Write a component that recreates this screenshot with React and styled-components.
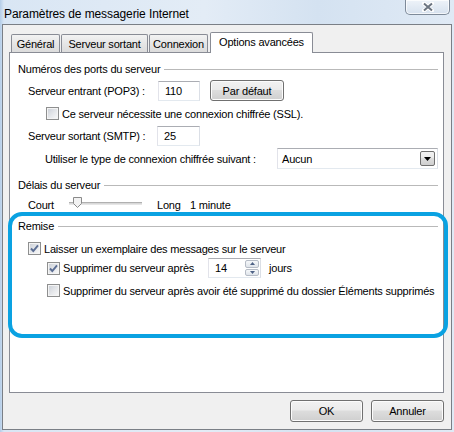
import React from "react";
import styled, { createGlobalStyle } from "styled-components";

const GlobalStyle = createGlobalStyle`
  html, body {
    margin: 0;
    padding: 0;
  }
  body {
    width: 454px;
    height: 432px;
    overflow: hidden;
    font-family: "Liberation Sans", Arial, sans-serif;
    font-size: 11px;
    letter-spacing: -0.2px;
    color: #000;
  }
  * {
    box-sizing: border-box;
  }
`;

const Window = styled.div`
  position: relative;
  width: 454px;
  height: 432px;
  display: flex;
  flex-direction: column;
  background: linear-gradient(90deg, #b4cde8 0px, #d9e6f4 4px, #e3ecf6 45%, #d4e2f1 70%, #e0eaf5 100%);
`;

const TitleBar = styled.div`
  height: 24px;
  display: flex;
  align-items: flex-start;
`;

const Title = styled.div`
  padding: 6px 0 0 4px;
  line-height: 16px;
  font-size: 12px;
  letter-spacing: -0.1px;
`;

const CloseButton = styled.div`
  margin-left: auto;
  margin-right: 4px;
  width: 45px;
  height: 15px;
  display: flex;
  align-items: center;
  justify-content: center;
  border: 1px solid #7e8a99;
  border-top: none;
  border-radius: 0 0 5px 5px;
  background: linear-gradient(#eef3f9, #d6e1ee);
  box-shadow: inset 0 0 0 1px rgba(255, 255, 255, 0.7);
`;

const Client = styled.div`
  flex: 1;
  margin: 0 2px 2px 2px;
  border: 1px solid #7a7f86;
  background: #f0f0f0;
  padding: 6px 7px 7px 6px;
  display: flex;
  flex-direction: column;
`;

const TabStrip = styled.div`
  height: 21px;
  display: flex;
  align-items: flex-end;
  gap: 1px;
  padding-left: 2px;
  position: relative;
  z-index: 1;
`;

const Tab = styled.div`
  width: ${(p) => p.$w}px;
  height: ${(p) => (p.$active ? 21 : 18)}px;
  margin-bottom: ${(p) => (p.$active ? -1 : 0)}px;
  margin-left: ${(p) => (p.$active ? 1 : 0)}px;
  border: 1px solid #898c95;
  border-bottom: none;
  border-radius: 2px 2px 0 0;
  background: ${(p) => (p.$active ? "#fff" : "linear-gradient(#f3f3f3, #e6e6e6 50%, #dcdcdc)")};
  display: flex;
  align-items: center;
  justify-content: center;
  padding-bottom: ${(p) => (p.$active ? 3 : 0)}px;
  white-space: nowrap;
`;

const Panel = styled.div`
  height: 341px;
  background: #fff;
  border: 1px solid #898c95;
  padding: 0 5px 0 8px;
  display: flex;
  flex-direction: column;
`;

const GroupHeader = styled.div`
  height: 15px;
  margin-top: ${(p) => p.$mt}px;
  display: flex;
  align-items: center;
  gap: 4px;
  white-space: nowrap;
`;

const GroupLine = styled.div`
  flex: 1;
  height: 1px;
  background: #b9b9b9;
  margin-top: 1px;
`;

const Row = styled.div`
  height: ${(p) => p.$h}px;
  margin-top: ${(p) => p.$mt}px;
  margin-left: ${(p) => p.$ml}px;
  display: flex;
  align-items: center;
  white-space: nowrap;
`;

const Label = styled.span`
  width: ${(p) => (p.$w ? `${p.$w}px` : "auto")};
  flex-shrink: 0;
  margin-left: ${(p) => p.$ml || 0}px;
`;

const TextBox = styled.div`
  width: ${(p) => p.$w}px;
  height: 20px;
  border: 1px solid #abadb3;
  border-color: #abadb3 #dbdfe6 #e3e9ef #e2e3ea;
  background: #fff;
  display: flex;
  align-items: center;
  padding-left: ${(p) => p.$pl || 6}px;
`;

const PushButton = styled.div`
  width: ${(p) => p.$w}px;
  height: ${(p) => p.$h || 21}px;
  margin-left: ${(p) => p.$ml || 0}px;
  border: 1px solid #707070;
  border-radius: 3px;
  background: linear-gradient(#f2f2f2 0%, #ebebeb 45%, #dddddd 50%, #cfcfcf 100%);
  box-shadow: inset 0 0 0 1px #fcfcfc;
  display: flex;
  align-items: center;
  justify-content: center;
`;

const Box = styled.div`
  width: 13px;
  height: 13px;
  flex-shrink: 0;
  margin-right: 3px;
  border: 1px solid #8e8f8f;
  background: linear-gradient(135deg, #c9ced6 0%, #e6e8eb 55%, #fafafa 100%);
  box-shadow: inset 0 0 0 1px #f4f4f4;
  display: flex;
  align-items: center;
  justify-content: center;
`;

const Select = styled.div`
  width: 164px;
  height: 21px;
  border: 1px solid #abadb3;
  border-color: #abadb3 #dbdfe6 #e3e9ef #e2e3ea;
  background: #fff;
  display: flex;
  align-items: center;
  padding: 0 2px 0 4px;
`;

const SelectValue = styled.span`
  flex: 1;
`;

const DropButton = styled.div`
  width: 15px;
  height: 15px;
  border: 1px solid #707070;
  border-radius: 2px;
  background: linear-gradient(#f2f2f2 0%, #ebebeb 45%, #dddddd 50%, #cfcfcf 100%);
  display: flex;
  align-items: center;
  justify-content: center;
`;

const Spin = styled.div`
  width: 53px;
  height: 20px;
  border: 1px solid #abadb3;
  border-color: #abadb3 #dbdfe6 #e3e9ef #e2e3ea;
  background: #fff;
  display: flex;
`;

const SpinValue = styled.div`
  flex: 1;
  display: flex;
  align-items: center;
  padding-left: 6px;
`;

const SpinButtons = styled.div`
  width: 16px;
  display: flex;
  flex-direction: column;
  padding: 1px;
  gap: 1px;
`;

const SpinHalf = styled.div`
  flex: 1;
  border: 1px solid #b6bcc6;
  border-radius: 2px;
  background: linear-gradient(#f6f8fa, #dfe4ea);
  display: flex;
  align-items: center;
  justify-content: center;
`;

const Track = styled.div`
  position: relative;
  width: 73px;
  height: 3px;
  margin-top: -3px;
  border-top: 1px solid #b0b0b0;
  border-bottom: 1px solid #e6e6e6;
  background: #d8d8d8;
`;

const Thumb = styled.svg`
  position: absolute;
  left: 3px;
  top: -6px;
`;

const ButtonRow = styled.div`
  margin-top: 7px;
  display: flex;
  justify-content: flex-end;
  gap: 8px;
`;

const Highlight = styled.div`
  position: absolute;
  left: 8px;
  top: 212px;
  width: 440px;
  height: 126px;
  border: 4px solid #0aa2e2;
  border-radius: 14px;
  pointer-events: none;
`;

function Check({ checked }) {
  return (
    <Box>
      {checked && (
        <svg width="11" height="11" viewBox="0 0 11 11">
          <path d="M2 5.5 L4.3 8 L9 2.3" fill="none" stroke="#5b6d93" strokeWidth="1.9" />
        </svg>
      )}
    </Box>
  );
}

function Arrow({ up, color = "#000", w = 7, h = 4 }) {
  return (
    <svg width={w} height={h} viewBox="0 0 7 4">
      <path d={up ? "M0 4 L3.5 0 L7 4 Z" : "M0 0 L7 0 L3.5 4 Z"} fill={color} />
    </svg>
  );
}

export default function App() {
  return (
    <Window>
      <GlobalStyle />
      <TitleBar>
        <Title>Paramètres de messagerie Internet</Title>
        <CloseButton>
          <svg width="12" height="10" viewBox="0 0 12 10">
            <path d="M2 1.5 L10 8.5 M10 1.5 L2 8.5" stroke="#fff" strokeWidth="4" strokeLinecap="round" />
            <path d="M2 1.5 L10 8.5 M10 1.5 L2 8.5" stroke="#6b7480" strokeWidth="2" />
          </svg>
        </CloseButton>
      </TitleBar>
      <Client>
        <TabStrip>
          <Tab $w={49}>Général</Tab>
          <Tab $w={87}>Serveur sortant</Tab>
          <Tab $w={59}>Connexion</Tab>
          <Tab $w={103} $active>Options avancées</Tab>
        </TabStrip>
        <Panel>
          <GroupHeader $mt={8}>
            Numéros des ports du serveur
            <GroupLine />
          </GroupHeader>
          <Row $h={21} $mt={4} $ml={10}>
            <Label $w={130}>Serveur entrant (POP3) :</Label>
            <TextBox $w={42}>110</TextBox>
            <PushButton $w={74} $ml={10}>Par défaut</PushButton>
          </Row>
          <Row $h={15} $mt={5} $ml={28}>
            <Check />
            <Label>Ce serveur nécessite une connexion chiffrée (SSL).</Label>
          </Row>
          <Row $h={21} $mt={4} $ml={10}>
            <Label $w={129}>Serveur sortant (SMTP) :</Label>
            <TextBox $w={43}>25</TextBox>
          </Row>
          <Row $h={21} $mt={2} $ml={27}>
            <Label $w={232}>Utiliser le type de connexion chiffrée suivant :</Label>
            <Select>
              <SelectValue>Aucun</SelectValue>
              <DropButton>
                <Arrow />
              </DropButton>
            </Select>
          </Row>
          <GroupHeader $mt={8}>
            Délais du serveur
            <GroupLine />
          </GroupHeader>
          <Row $h={15} $mt={5} $ml={10}>
            <Label $w={41}>Court</Label>
            <Track>
              <Thumb width="11" height="11" viewBox="0 0 11 11">
                <path d="M1.5 0.5 H9.5 V6.5 L5.5 10.5 L1.5 6.5 Z" fill="#f2f2f2" stroke="#8a8a8a" />
              </Thumb>
            </Track>
            <Label $w={33} $ml={15}>Long</Label>
            <Label>1 minute</Label>
          </Row>
          <GroupHeader $mt={6}>
            Remise
            <GroupLine />
          </GroupHeader>
          <Row $h={15} $mt={8} $ml={10}>
            <Check checked />
            <Label>Laisser un exemplaire des messages sur le serveur</Label>
          </Row>
          <Row $h={20} $mt={2} $ml={29}>
            <Check checked />
            <Label $w={145}>Supprimer du serveur après</Label>
            <Spin>
              <SpinValue>14</SpinValue>
              <SpinButtons>
                <SpinHalf>
                  <Arrow up color="#4d6185" w={5} h={3} />
                </SpinHalf>
                <SpinHalf>
                  <Arrow color="#4d6185" w={5} h={3} />
                </SpinHalf>
              </SpinButtons>
            </Spin>
            <Label $ml={8}>jours</Label>
          </Row>
          <Row $h={15} $mt={5} $ml={29}>
            <Check />
            <Label>Supprimer du serveur après avoir été supprimé du dossier Éléments supprimés</Label>
          </Row>
        </Panel>
        <ButtonRow>
          <PushButton $w={73} $h={22}>OK</PushButton>
          <PushButton $w={73} $h={22}>Annuler</PushButton>
        </ButtonRow>
      </Client>
      <Highlight />
    </Window>
  );
}
